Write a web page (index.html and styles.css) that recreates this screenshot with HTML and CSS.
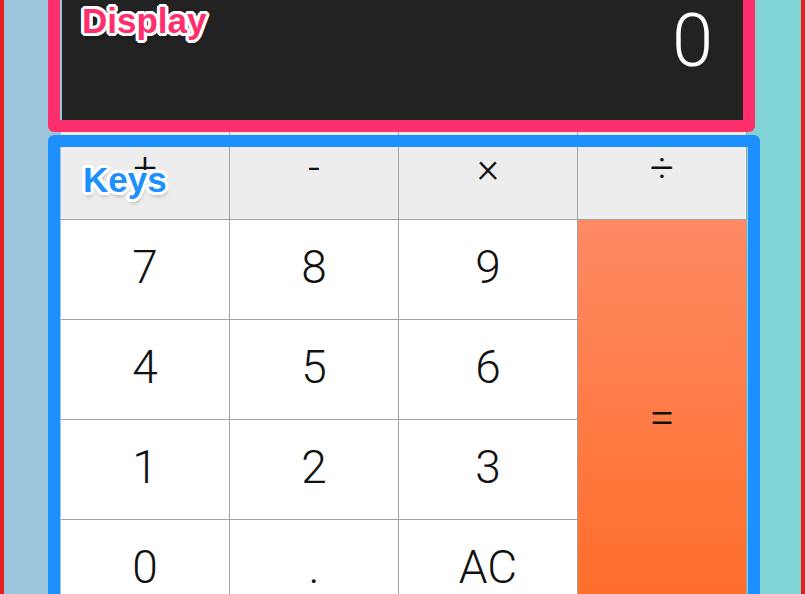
FILE: index.html
```html
<!DOCTYPE html>
<html>
<head>
<meta charset="utf-8">
<link rel="stylesheet" href="styles.css">
</head>
<body>
<div class="frame">
  <div class="calc">
    <div class="display"><span class="value">0</span></div>
    <div class="keys">
      <div class="key op">+</div>
      <div class="key op">-</div>
      <div class="key op">×</div>
      <div class="key op">÷</div>
      <div class="key">7</div>
      <div class="key">8</div>
      <div class="key">9</div>
      <div class="key eq">=</div>
      <div class="key">4</div>
      <div class="key">5</div>
      <div class="key">6</div>
      <div class="key">1</div>
      <div class="key">2</div>
      <div class="key">3</div>
      <div class="key">0</div>
      <div class="key">.</div>
      <div class="key">AC</div>
    </div>
  </div>
  <div class="overlay overlay-display"></div>
  <div class="overlay overlay-keys"></div>
  <div class="tag tag-display">Display</div>
  <div class="tag tag-keys">Keys</div>
</div>
</body>
</html>
```

FILE: styles.css
```css
html, body {
  margin: 0;
  padding: 0;
  height: 594px;
  overflow: hidden;
}
body {
  background: linear-gradient(to right, #9cc5dc 0%, #8fcbd9 50%, #80d4d5 100%);
  font-family: Roboto, "Liberation Sans", sans-serif;
}
.frame {
  position: relative;
  box-sizing: border-box;
  width: 805px;
  height: 594px;
  border-left: 4px solid #e3201f;
  border-right: 4px solid #e3201f;
  padding-left: 57px;
}
.calc {
  width: 686px;
}
.display {
  margin-left: 1px;
  height: 120px;
  background: #222222;
  display: flex;
  align-items: flex-end;
  justify-content: flex-end;
  box-sizing: border-box;
  padding-right: 34px;
}
.value {
  color: #ffffff;
  font-family: Roboto, sans-serif;
  font-weight: 300;
  font-size: 74px;
  line-height: 1.2;
  margin-bottom: 34px;
}
.keys {
  display: grid;
  grid-template-columns: 168px 168px 178px 168px;
  grid-auto-rows: 99px;
  gap: 1px;
  background: #a2a2a2;
  border-right: 1px solid #a2a2a2;
  width: 685px;
}
.key {
  background: #ffffff;
  display: flex;
  align-items: center;
  justify-content: center;
  font-size: 46px;
  font-weight: 300;
  color: #111111;
  padding-bottom: 5px;
  box-sizing: border-box;
}
.op {
  background: #ededed;
  font-size: 42px;
}
.eq {
  grid-column: 4;
  grid-row: 2 / span 4;
  background: linear-gradient(to bottom, #ff8a64 0%, #ff6c27 100%);
}
.overlay {
  position: absolute;
  box-sizing: border-box;
  border-radius: 6px;
}
.overlay-display {
  left: 44px;
  top: -40px;
  width: 707px;
  height: 172px;
  border: 12px solid #ff2e6c;
}
.overlay-keys {
  left: 44px;
  top: 135px;
  width: 712px;
  height: 520px;
  border: 12px solid #1e8fff;
}
.tag {
  position: absolute;
  font-family: "Liberation Sans", Arial, sans-serif;
  font-weight: bold;
  font-size: 35px;
  line-height: 1;
  text-shadow:
    3px 0 0 #fff, -3px 0 0 #fff, 0 3px 0 #fff, 0 -3px 0 #fff,
    2px 2px 0 #fff, -2px 2px 0 #fff, 2px -2px 0 #fff, -2px -2px 0 #fff,
    1px 3px 0 #fff, -1px 3px 0 #fff, 3px 1px 0 #fff, -3px 1px 0 #fff,
    1px -3px 0 #fff, -1px -3px 0 #fff, 3px -1px 0 #fff, -3px -1px 0 #fff,
    1px 4px 4px rgba(0,0,0,0.3);
}
.tag-display {
  left: 78px;
  top: 3px;
  color: #ff2e6c;
}
.tag-keys {
  left: 79px;
  top: 162px;
  color: #1e8fff;
}
```
